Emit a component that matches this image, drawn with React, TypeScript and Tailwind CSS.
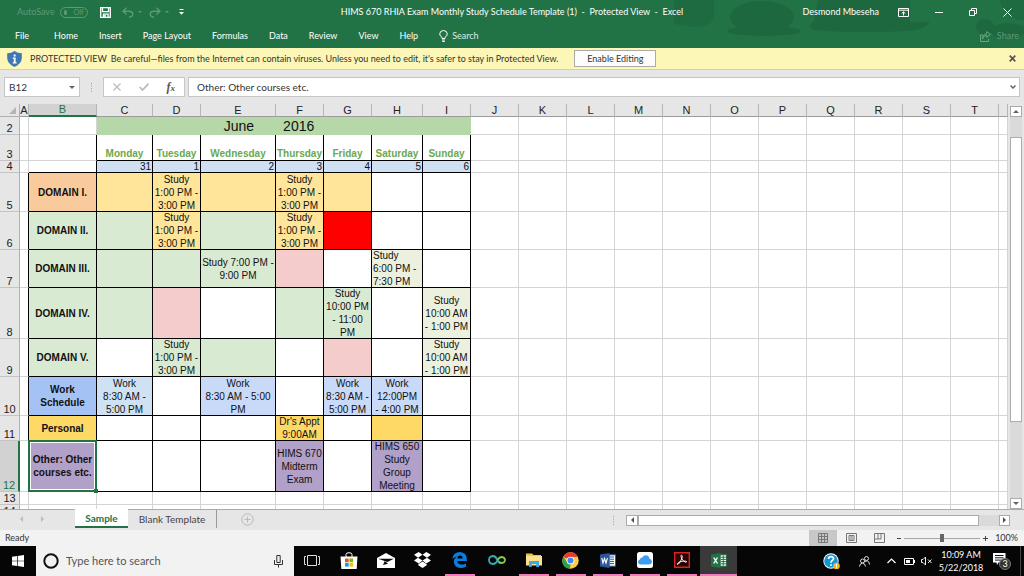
import React from "react";

const UI = "font-['Lato','Open_Sans',sans-serif]";
const SHEET = "font-['Liberation_Sans',Arial,sans-serif]";

type Cell = { text?: string; fill?: string; align?: string };
type Row = { n: number; height: string; label: string; fill: string; cells: Cell[] };

const GREEN = "bg-[#d9ead3]";
const YELLOW = "bg-[#ffe599]";
const PINK = "bg-[#f4cccc]";
const OLIVE = "bg-[#ebf1de]";
const BLUE = "bg-[#c9daf8]";
const GOLD = "bg-[#ffd966]";
const PURPLE = "bg-[#b1a0c7]";
const AFTERNOON = "Study\n1:00 PM -\n3:00 PM";
const MORNING = "Study\n10:00 AM\n- 1:00 PM";

const rows: Row[] = [
  { n: 5, height: "h-[39px]", label: "DOMAIN I.", fill: "bg-[#f9cb9c]", cells: [{ fill: YELLOW }, { fill: YELLOW, text: AFTERNOON }, { fill: YELLOW }, { fill: YELLOW, text: AFTERNOON }, { fill: YELLOW }, {}, {}] },
  { n: 6, height: "h-[38px]", label: "DOMAIN II.", fill: GREEN, cells: [{ fill: GREEN }, { fill: YELLOW, text: AFTERNOON }, { fill: GREEN }, { fill: YELLOW, text: AFTERNOON }, { fill: "bg-[#ff0000]" }, {}, {}] },
  { n: 7, height: "h-[38px]", label: "DOMAIN III.", fill: GREEN, cells: [{ fill: GREEN }, { fill: GREEN }, { fill: GREEN, text: "Study 7:00 PM -\n9:00 PM" }, { fill: PINK }, {}, { fill: OLIVE, text: "Study\n6:00 PM -\n7:30 PM", align: "text-left pl-px" }, {}] },
  { n: 8, height: "h-[51px]", label: "DOMAIN IV.", fill: GREEN, cells: [{ fill: GREEN }, { fill: PINK }, {}, { fill: GREEN }, { fill: GREEN, text: "Study\n10:00 PM\n- 11:00\nPM" }, {}, { fill: OLIVE, text: MORNING }] },
  { n: 9, height: "h-[38px]", label: "DOMAIN V.", fill: GREEN, cells: [{}, { fill: GREEN, text: AFTERNOON }, { fill: GREEN }, {}, { fill: PINK }, {}, { fill: OLIVE, text: MORNING }] },
  { n: 10, height: "h-[39px]", label: "Work\nSchedule", fill: "bg-[#a4c2f4]", cells: [{ fill: "bg-[#cfe2f3]", text: "Work\n8:30 AM -\n5:00 PM" }, {}, { fill: BLUE, text: "Work\n8:30 AM - 5:00\nPM" }, {}, { fill: BLUE, text: "Work\n8:30 AM -\n5:00 PM" }, { fill: BLUE, text: "Work\n12:00PM\n- 4:00 PM" }, {}] },
  { n: 11, height: "h-[25px]", label: "Personal", fill: GOLD, cells: [{}, {}, {}, { fill: GOLD, text: "Dr's Appt\n9:00AM" }, {}, { fill: GOLD }, {}] },
  { n: 12, height: "h-[51px]", label: "Other: Other\ncourses etc.", fill: PURPLE, cells: [{}, {}, {}, { fill: PURPLE, text: "HIMS 670\nMidterm\nExam" }, {}, { fill: PURPLE, text: "HIMS 650\nStudy\nGroup\nMeeting" }, {}] },
];

const columns = [
  ["A", "w-[9px]"], ["B", "w-[68px]"], ["C", "w-[56px]"], ["D", "w-[48px]"], ["E", "w-[75px]"],
  ["F", "w-[48px]"], ["G", "w-[48px]"], ["H", "w-[51px]"], ["I", "w-[48px]"], ["J", "w-[48px]"],
  ["K", "w-[48px]"], ["L", "w-[48px]"], ["M", "w-[48px]"], ["N", "w-[48px]"], ["O", "w-[48px]"],
  ["P", "w-[48px]"], ["Q", "w-[48px]"], ["R", "w-[48px]"], ["S", "w-[48px]"], ["T", "w-[48px]"], ["", ""],
];
const days = ["Monday", "Tuesday", "Wednesday", "Thursday", "Friday", "Saturday", "Sunday"];
const dates = [31, 1, 2, 3, 4, 5, 6];
const LINE = "border-r border-b border-[#d4d4d4] p-0";
const BLACK = "border-r border-b border-black p-0";

function Blank({ count }: { count: number }) {
  return <>{Array.from({ length: count }, (_, i) => <td key={i} className={LINE} />)}</>;
}

function RowHead({ n, active = false }: { n: number; active?: boolean }) {
  return (
    <th
      scope="row"
      className={
        active
          ? "border-r-2 border-b border-r-[#217346] border-b-[#c4c4c4] bg-[#d2d2d2] p-0 text-center align-bottom text-[11px] leading-[11px] font-normal text-[#217346]"
          : "border-r border-b border-r-[#b0b0b0] border-b-[#c4c4c4] bg-[#e6e6e6] p-0 text-center align-bottom text-[11px] leading-[11px] font-normal text-[#222]"
      }
    >
      {n}
    </th>
  );
}

function TitleBar() {
  return (
    <div className="relative grid h-6 grid-cols-[1fr_auto_1fr] items-center text-[9px] text-white">
      <div className="flex items-center pl-[17px]">
        <button type="button" role="switch" aria-checked="false" className="flex items-center gap-[5px] text-[#5d9a78]">
          AutoSave
          <span className="flex h-[11px] w-[28px] items-center gap-[6px] rounded-full border border-[#5d9a78] px-[3px] text-[7px] leading-none">
            <span className="size-[5px] rounded-full bg-[#5d9a78]" />
            Off
          </span>
        </button>
        <button type="button" aria-label="Save" className="ml-3">
          <svg className="size-[11px]" viewBox="0 0 11 11" fill="none" stroke="white" strokeWidth="1.3">
            <path d="M.7.7h9.6v9.6H.7zM2.5.7v4h6v-4M3.5 10.3V7.2h4.6v3.1" /><path d="M4.2 8h1.6v2H4.2z" fill="white" stroke="none" />
          </svg>
        </button>
        <button type="button" aria-label="Undo" className="ml-[11px] flex items-center gap-1">
          <svg className="h-[11px] w-3" viewBox="0 0 12 11" fill="none" stroke="#5d9a78" strokeWidth="1.4"><path d="M4.5.8 1 4.2l3.6 3.3M1.3 4.2H7q3.8.2 3.8 3Q10.700 9.800 7 10.200" /></svg>
          <span className="border-x-2 border-t-2 border-x-transparent border-t-[#5d9a78]" />
        </button>
        <button type="button" aria-label="Redo" className="ml-[7px] flex items-center gap-1">
          <svg className="h-[11px] w-3" viewBox="0 0 12 11" fill="none" stroke="#5d9a78" strokeWidth="1.4"><path d="M7.500.8 11 4.200 7.400 7.500M10.700 4.200H5q-3.800.2-3.800 3 .1 2.600 3.800 3" /></svg>
          <span className="border-x-2 border-t-2 border-x-transparent border-t-[#5d9a78]" />
        </button>
        <button type="button" aria-label="Customize toolbar" className="ml-[10px]">
          <svg className="h-[6px] w-[5px]" viewBox="0 0 5 6" fill="white"><path d="M.5 0h4v1h-4zM0 3h5L2.500 5.700z" /></svg>
        </button>
      </div>
      <h1 className="text-[9px] font-normal whitespace-pre">HIMS 670 RHIA Exam Monthly Study Schedule Template (1)  -  Protected View  -  Excel</h1>
      <div className="flex items-center justify-end pr-3">
        <span className="mr-[19px]">Desmond Mbeseha</span>
        <button type="button" aria-label="Ribbon display options" className="mr-[26px]">
          <svg className="h-[9px] w-[11px]" viewBox="0 0 11 9" fill="none" stroke="white"><path d="M.5.5h10v8H.5zM.5 2.200h10M5.500 7.500V4M3.700 5.500 5.500 3.800l1.800 1.700" /></svg>
        </button>
        <button type="button" aria-label="Minimize" className="mr-[26px] h-px w-2 bg-white" />
        <button type="button" aria-label="Restore" className="mr-[26px]">
          <svg className="size-2" viewBox="0 0 8 8" fill="none" stroke="white"><path d="M.5 2.500h5v5h-5zM2.500 2.500v-2h5v5h-2" /></svg>
        </button>
        <button type="button" aria-label="Close window">
          <svg className="size-[9px]" viewBox="0 0 9 9" stroke="white"><path d="m.5.500 8 8m0-8-8 8" /></svg>
        </button>
      </div>
    </div>
  );
}

const tabs = ["Home", "Insert", "Page Layout", "Formulas", "Data", "Review", "View", "Help"];

function Ribbon() {
  return (
    <div className="relative flex h-6 items-center text-[9px] text-white">
      <nav className="flex items-center gap-[21px] pl-[15px]">
        <a href="#file" className="mr-1">File</a>
        {tabs.map((t) => <a key={t} href={"#" + t.toLowerCase().replace(" ", "-")}>{t}</a>)}
        <button type="button" className="flex items-center gap-1 text-[#dcebe2]">
          <svg className="h-3 w-[9px]" viewBox="0 0 9 12" fill="none" stroke="white"><path d="M3 8.500V7.300Q.7 6 .7 3.900.9.700 4.500.500q3.600.2 3.800 3.400Q8.300 6 6 7.300v1.200zM3 10h3M3.300 11.500h2.400" /></svg>
          Search
        </button>
      </nav>
      <button type="button" className="mr-[5px] ml-auto flex items-center gap-[6px] text-[#5d9a78]">
        <svg className="h-[11px] w-[11px]" viewBox="0 0 11 11" fill="none" stroke="#6ba584"><path d="M3 4H.5v6.500h8V8M2.500 8Q3 4.500 6.800 4.300V6.300L10.500 3.300 6.800.7v2Q2.700 3.200 2.500 8" /></svg>
        Share
      </button>
    </div>
  );
}

function MessageBar() {
  return (
    <div role="alert" className="flex h-[22px] items-center border-b border-[#d8d29a] bg-[#fcf7b6] pl-[7px] text-[9px] text-[#333]">
      <svg className="mr-2 h-4 w-[15px]" viewBox="0 0 15 16"><path d="M7.500 0Q10.500 2.200 14.800 2.300V7.500Q14.300 13 7.500 16 .7 13 .2 7.500V2.300Q4.500 2.200 7.500 0" fill="#3d77b5" /><path d="M6.700 3.500h1.900v1.900H6.700zM5.800 6.500h2.800v4.700h1v1.200H5.700v-1.200h1.100V7.700h-1z" fill="white" /></svg>
      <strong className="mr-1 font-normal">PROTECTED VIEW</strong>
      <span className="mr-4">Be careful—files from the Internet can contain viruses. Unless you need to edit, it's safer to stay in Protected View.</span>
      <button type="button" className="h-[17px] w-[82px] border border-[#ababab] bg-[#fdfdfd] leading-none">Enable Editing</button>
      <button type="button" aria-label="Close message" className="mr-2 ml-auto">
        <svg className="size-[7px]" viewBox="0 0 7 7" stroke="#555" strokeWidth="1.700"><path d="m.7.700 5.600 5.600m0-5.600L.7 6.300" /></svg>
      </button>
    </div>
  );
}

function FormulaBar() {
  return (
    <div className="flex h-[34px] items-center bg-[#e6e6e6] pr-1 pl-1 text-[10px] text-[#333]">
      <div className="flex h-5 w-[76px] items-center border border-[#c6c6c6] bg-white pr-1">
        <input aria-label="Name box" defaultValue="B12" className="w-full min-w-0 pl-1 outline-none" />
        <span className="border-x-[3px] border-t-[3px] border-x-transparent border-t-[#666]" />
      </div>
      <svg className="mx-[11px] h-[9px] w-px" viewBox="0 0 1 9" fill="#999"><path d="M0 0h1v1H0zM0 2.600h1v1H0zM0 5.200h1v1H0zM0 7.800h1v1H0z" /></svg>
      <div className="flex h-5 w-[82px] items-center justify-between border border-[#c6c6c6] bg-white px-[9px]">
        <button type="button" aria-label="Cancel"><svg className="size-2" viewBox="0 0 8 8" stroke="#bbb" strokeWidth="1.200"><path d="m.5.500 7 7m0-7-7 7" /></svg></button>
        <button type="button" aria-label="Enter"><svg className="h-2 w-[10px]" viewBox="0 0 10 8" fill="none" stroke="#bbb" strokeWidth="1.700"><path d="m.7 4 2.800 3L9.500.7" /></svg></button>
        <button type="button" aria-label="Insert function" className="font-['Liberation_Serif',serif] text-[12px] leading-none font-bold text-[#555] italic">f<span className="text-[9px]">x</span></button>
      </div>
      <div className="ml-[3px] flex h-5 flex-1 items-center border border-[#c6c6c6] bg-white pr-[3px]">
        <input aria-label="Formula" defaultValue="Other: Other courses etc." className="w-full pl-2 outline-none" />
        <svg className="h-[4px] w-[6px]" viewBox="0 0 6 4" fill="none" stroke="#666" strokeWidth="1.500"><path d="m.5.500 2.500 2.500L5.500.500" /></svg>
      </div>
    </div>
  );
}

function Sheet() {
  return (
    <div className="min-w-0 flex-1 overflow-hidden bg-white">
      <table className={`${SHEET} w-full table-fixed border-separate border-spacing-0 text-[10px] leading-[13px] text-[#111]`}>
        <colgroup>
          <col className="w-[20px]" />
          {columns.map(([, w], i) => <col key={i} className={w} />)}
        </colgroup>
        <thead>
          <tr className="h-[13px]">
            <th className="border-r border-b border-[#b0b0b0] bg-[#e6e6e6] p-0"><span className="mr-[3px] ml-auto block w-[7px] border-b-[7px] border-l-[7px] border-b-[#b5b5b5] border-l-transparent" /></th>
            {columns.map(([name], i) => (
              <th
                key={i}
                scope="col"
                className={
                  name === "B"
                    ? "border-r border-b-2 border-r-[#b5b5b5] border-b-[#217346] bg-[#d2d2d2] p-0 text-[11px] leading-[11px] font-normal text-[#217346]"
                    : "border-r border-b border-r-[#b5b5b5] border-b-[#9b9b9b] bg-[#e6e6e6] p-0 text-[11px] leading-[12px] font-normal text-[#222]"
                }
              >
                {name}
              </th>
            ))}
          </tr>
        </thead>
        <tbody>
          <tr className="h-[18px]">
            <RowHead n={2} />
            <Blank count={2} />
            <td colSpan={7} className="bg-[#b6d7a8] p-0 pr-[30px]">
              <div className="flex justify-center gap-[29px] text-[14px] leading-[17px]"><span>June</span><span>2016</span></div>
            </td>
            <Blank count={12} />
          </tr>
          <tr className="h-[26px]">
            <RowHead n={3} />
            <Blank count={1} />
            <td className="border-r border-b border-r-black border-b-[#d4d4d4] p-0" />
            {days.map((d) => <th key={d} scope="col" className={`${BLACK} text-center align-bottom font-bold text-[#6aa84f]`}>{d}</th>)}
            <Blank count={12} />
          </tr>
          <tr className="h-[12px]">
            <RowHead n={4} />
            <Blank count={1} />
            <td className="border-r border-b border-black p-0" />
            {dates.map((d) => <td key={d} className={`${BLACK} bg-[#cfe0f3] pr-px text-right leading-[11px]`}>{d}</td>)}
            <Blank count={12} />
          </tr>
          {rows.map((r) => (
            <tr key={r.n} className={r.height}>
              <RowHead n={r.n} active={r.n === 12} />
              <td className="border-r border-b border-r-black border-b-[#d4d4d4] p-0" />
              <td className={`${BLACK} ${r.fill} relative text-center font-bold whitespace-pre`}>
                {r.label}
                {r.n === 12 && (
                  <span className="absolute -top-px -right-px -bottom-px -left-px border-2 border-[#217346] shadow-[inset_0_0_0_1px_white]">
                    <span className="absolute -right-[3px] -bottom-[3px] size-1 bg-[#217346]" />
                  </span>
                )}
              </td>
              {r.cells.map((c, i) => (
                <td key={i} className={`${BLACK} ${c.fill ?? "bg-white"} ${c.align ?? "text-center"}`}>
                  {c.text && <div className="-my-px whitespace-pre">{c.text}</div>}
                </td>
              ))}
              <Blank count={12} />
            </tr>
          ))}
          <tr className="h-[13px]"><RowHead n={13} /><Blank count={21} /></tr>
          <tr className="h-[13px]"><RowHead n={14} /><Blank count={21} /></tr>
        </tbody>
      </table>
    </div>
  );
}

function VerticalScroll() {
  return (
    <div className="flex w-4 flex-col items-center bg-[#e6e6e6] pt-[2px]">
      <button type="button" aria-label="Scroll up" className="flex h-[11px] w-3 items-center justify-center border border-[#ababab] bg-white"><span className="border-x-[3px] border-b-[3px] border-x-transparent border-b-[#666]" /></button>
      <div className="flex w-3 flex-1 flex-col bg-[#dadada] pt-5"><div className="h-[79%] border border-[#ababab] bg-white" /></div>
      <button type="button" aria-label="Scroll down" className="flex h-[11px] w-3 items-center justify-center border border-[#ababab] bg-white"><span className="border-x-[3px] border-t-[3px] border-x-transparent border-t-[#666]" /></button>
    </div>
  );
}

function SheetTabs() {
  return (
    <div className="flex h-[21px] items-start border-t border-[#ababab] bg-[#e6e6e6] text-[10px] text-[#444]">
      <div className="flex h-[18px] w-[75px] items-center gap-[18px] pl-5">
        <button type="button" aria-label="Previous sheet" className="border-y-[3px] border-r-[3px] border-y-transparent border-r-[#bbb]" />
        <button type="button" aria-label="Next sheet" className="border-y-[3px] border-l-[3px] border-y-transparent border-l-[#bbb]" />
      </div>
      <button type="button" className="-mt-px h-[19px] w-[53px] border-b-2 border-[#217346] bg-white leading-none font-bold text-[#217346]">Sample</button>
      <button type="button" className="h-[18px] w-[89px] border-r border-[#999] leading-none">Blank Template</button>
      <button type="button" aria-label="New sheet" className="mt-[3px] ml-6">
        <svg className="size-[13px]" viewBox="0 0 13 13" fill="none" stroke="#bbb"><circle cx="6.500" cy="6.500" r="5.700" /><path d="M3.500 6.500h6m-3-3v6" /></svg>
      </button>
      <div className="ml-auto flex h-5 items-center pr-[14px]">
        <svg className="mr-3 h-[9px] w-px" viewBox="0 0 1 9" fill="#999"><path d="M0 0h1v1H0zM0 2.600h1v1H0zM0 5.200h1v1H0zM0 7.800h1v1H0z" /></svg>
        <button type="button" aria-label="Scroll left" className="flex h-[11px] w-3 items-center justify-center border border-[#ababab] bg-white"><span className="border-y-[3px] border-r-[3px] border-y-transparent border-r-[#555]" /></button>
        <div className="h-[11px] w-[341px] border border-[#ababab] bg-white" />
        <div className="h-[11px] w-5 bg-[#dadada]" />
        <button type="button" aria-label="Scroll right" className="flex h-[11px] w-[11px] items-center justify-center border border-[#ababab] bg-white"><span className="border-y-[3px] border-l-[3px] border-y-transparent border-l-[#555]" /></button>
      </div>
    </div>
  );
}

function StatusBar() {
  return (
    <div className="flex h-4 items-center bg-[#f2f2f2] pl-[5px] text-[9px] text-[#333]">
      <span>Ready</span>
      <div className="ml-auto flex h-full items-center">
        <button type="button" aria-label="Normal view" className="flex h-full w-7 items-center justify-center bg-[#c8c8c8]">
          <svg className="size-[10px]" viewBox="0 0 10 10" fill="none" stroke="#777"><path d="M.5.500h9v9h-9zM3.500.500v9M6.500.500v9M.5 3.500h9M.5 6.500h9" /></svg>
        </button>
        <button type="button" aria-label="Page layout view" className="flex w-7 justify-center">
          <svg className="h-[10px] w-[11px]" viewBox="0 0 11 10" fill="none" stroke="#777"><path d="M.5.500h10v9H.500zM3 2.500h5v5H3zM4 4h3M4 6h3" /></svg>
        </button>
        <button type="button" aria-label="Page break preview" className="flex w-7 justify-center">
          <svg className="h-[10px] w-[11px]" viewBox="0 0 11 10" fill="none" stroke="#777"><path d="M.5.500h10v9H.500zM4 .5V6M7 .5V6M.5 6H7" /></svg>
        </button>
        <button type="button" aria-label="Zoom out" className="ml-1 h-px w-1 bg-[#444]" />
        <input type="range" aria-label="Zoom" defaultValue={50} className="mx-[3px] h-2 w-[76px] appearance-none bg-[linear-gradient(#a6a6a6,#a6a6a6)] bg-[length:100%_1px] bg-center bg-no-repeat [&::-webkit-slider-thumb]:h-2 [&::-webkit-slider-thumb]:w-1 [&::-webkit-slider-thumb]:appearance-none [&::-webkit-slider-thumb]:bg-[#666]" />
        <button type="button" aria-label="Zoom in"><svg className="size-[5px]" viewBox="0 0 5 5" stroke="#444"><path d="M0 2.500h5M2.500 0v5" /></svg></button>
        <span className="mr-[6px] ml-[7px]">100%</span>
      </div>
    </div>
  );
}

function TaskButton({ label, running = false, active = false, children }: { label: string; running?: boolean; active?: boolean; children: React.ReactNode }) {
  return (
    <button type="button" aria-label={label} className={active ? "flex h-full w-[37px] flex-col items-center bg-[#3a3a3a]" : "flex h-full w-[37px] flex-col items-center"}>
      <span className="flex flex-1 items-center">{children}</span>
      <span className={active ? "h-[2px] w-full bg-[#f07cc0]" : running ? "h-[2px] w-[30px] bg-[#f07cc0]" : "h-[2px] w-[30px]"} />
    </button>
  );
}

function Taskbar() {
  return (
    <div className="flex h-[30px] items-center bg-[#070606] text-white">
      <button type="button" aria-label="Start" className="flex w-9 justify-center">
        <svg className="size-3" viewBox="0 0 12 12" fill="white"><path d="M0 1.700 5 1v4.700H0zM5.700.900 12 0v5.700H5.700zM0 6.300h5V11l-5-.7zM5.700 6.300H12V12l-6.300-.9z" /></svg>
      </button>
      <label className="flex h-full w-[258px] items-center bg-[#f2f2f2] pl-[7px]">
        <svg className="mr-[7px] size-4" viewBox="0 0 16 16" fill="none" stroke="#111" strokeWidth="2"><circle cx="8" cy="8" r="6.700" /></svg>
        <input aria-label="Search" placeholder="Type here to search" className="min-w-0 flex-1 text-[11px] text-[#333] outline-none placeholder:text-[#555]" />
        <svg className="mr-[11px] h-[13px] w-[9px]" viewBox="0 0 9 13" fill="none" stroke="#333"><path d="M2.800.500h3.400v7H2.800zM.5 5v4.500h8V5M4.500 9.500v3" /></svg>
      </label>
      <div className="-ml-px flex h-full">
        <TaskButton label="Task view">
          <svg className="h-[11px] w-4" viewBox="0 0 16 11" fill="none" stroke="#ddd"><path d="M3.500.500h9v10h-9zM2 1.500H.5v8H2M14 1.500h1.500v8H14" /></svg>
        </TaskButton>
        <TaskButton label="Store">
          <svg className="h-[17px] w-[18px]" viewBox="0 0 18 17"><path d="M6 5V2.500Q6 .7 9 .7t3 1.800V5" fill="none" stroke="white" /><path d="M.5 4.500h17L16.700 17H1.300z" fill="white" /><path d="M5 6.500h3.700v3.700H5z" fill="#f25022" /><path d="M9.400 6.500h3.700v3.700H9.400z" fill="#7fba00" /><path d="M5 10.900h3.700v3.700H5z" fill="#00a4ef" /><path d="M9.400 10.900h3.700v3.700H9.400z" fill="#ffb900" /></svg>
        </TaskButton>
        <TaskButton label="Mail">
          <svg className="h-[15px] w-[18px]" viewBox="0 0 18 15"><path d="M0 5 9 0l9 5v10H0z" fill="white" /><path d="M1.200 5.700h15.600L10.500 9z" fill="#090909" /><path d="M7.800 8 11 10.800 6 12z" fill="#090909" /></svg>
        </TaskButton>
        <TaskButton label="Dropbox">
          <svg className="h-4 w-[17px]" viewBox="0 0 17 16" fill="white"><path d="M4.700 0 8.500 2.800 4 5.700 0 2.700zM12.300 0 8.500 2.800 13 5.700l4-3zM4 5.700 8.500 8.500 4.700 11.400 0 8.500zM13 5.700 8.500 8.500l3.800 2.900L17 8.500zM4.300 12.200 8.500 9.500l4.200 2.700v1L8.500 16l-4.200-2.800z" /></svg>
        </TaskButton>
        <TaskButton label="Edge" running>
          <svg className="h-4 w-[15px]" viewBox="0 0 15 16"><path d="M.3 7Q1.300.200 8 .1q6.700.5 6.800 7v2H5.200q.3 3.300 4.300 3.500 2.500 0 4.500-1.200v3.400q-2.500 1.200-5.500 1.200-6.200-.3-6.700-6.200Q2 5.800 5.600 4.500 2.300 4.500.3 7m5-0.600h5.400Q10.500 3.600 8 3.600 5.600 3.700 5.300 6.400" fill="#0a7ee0" /></svg>
        </TaskButton>
        <TaskButton label="Sync">
          <svg className="h-[10px] w-[18px]" viewBox="0 0 18 10" fill="none" strokeWidth="1.800"><path d="M9.300 5.500Q8.300 9 5 9 1 8.700 1 5t4-4q2.500 0 4.500 4t4 3" stroke="#35a8b5" /><path d="M9.500 5.500Q11 2 13.800 2q3 .3 3.200 3-.2 2.800-3 3-2-.1-3-1.500" stroke="#8bc34a" /></svg>
        </TaskButton>
        <TaskButton label="File Explorer" running>
          <svg className="h-[14px] w-4" viewBox="0 0 16 14"><path d="M0 .5h6L7.500 2H15v10H0z" fill="#f0c04a" /><path d="M0 3h16v9.500H0z" fill="#fce08a" /><path d="M3 8h10v6h-2.800v-3H5.800v3H3z" fill="#3fa9e6" /></svg>
        </TaskButton>
        <TaskButton label="Chrome" running>
          <svg className="size-[17px]" viewBox="0 0 18 18"><circle cx="9" cy="9" r="8.700" fill="#ffcd40" /><path d="M9 9 1.300 5Q3.800.4 9 .3 14.500.5 17 5.200H9z" fill="#e33b2e" /><path d="M1.400 4.900 5.700 11 9 13l-.8 4.700Q1.500 17 .3 10.500.1 7.300 1.400 4.900" fill="#2ba24c" /><circle cx="9" cy="9" r="4.100" fill="white" /><circle cx="9" cy="9" r="3.200" fill="#4285f4" /></svg>
        </TaskButton>
        <TaskButton label="Word" running>
          <svg className="h-[15px] w-4" viewBox="0 0 16 15"><path d="M9 1.800h6.500v11.400H9z" fill="white" stroke="#2b579a" /><path d="M10 4h4M10 6.200h4M10 8.400h4M10 10.600h4" stroke="#2b579a" /><path d="M0 1.600 9.500 0v15L0 13.400z" fill="#2b579a" /><path d="m1.800 5 1.200 5 1.500-4.500L6 10l1.400-5" fill="none" stroke="white" strokeWidth="1.100" /></svg>
        </TaskButton>
        <TaskButton label="iCloud" running>
          <svg className="size-4" viewBox="0 0 16 16"><rect width="16" height="16" rx="2.500" fill="white" /><path d="M4 12.500Q1 12.300 1 9.800q.2-2 2-2.400Q3.300 5.300 5.300 5.500 6.500 3 9 3.200q3 .3 3.600 3.600 2.400.6 2.400 3-.2 2.500-3 2.700z" fill="#3c9df3" /></svg>
        </TaskButton>
        <TaskButton label="Acrobat" running>
          <svg className="size-4" viewBox="0 0 16 16"><path d="M.7.700h14.600v14.600H.7z" fill="#2b0504" stroke="#d9251c" strokeWidth="1.400" /><path d="M7.500 3q1.300 0 .5 3Q7 9 4.500 12 3 13 3.300 11.700 4.200 10 8 9.300t4.700.4q-.5 1.300-2.700-.4Q7.200 7 7 4.500 7 3 7.500 3" fill="none" stroke="white" strokeWidth=".9" /></svg>
        </TaskButton>
        <TaskButton label="Excel" active>
          <svg className="h-[15px] w-4" viewBox="0 0 16 15"><path d="M9 1.800h6.500v11.400H9z" fill="white" stroke="#217346" /><path d="M10 4.200h5M10 6.400h5M10 8.600h5M10 10.800h5M12.300 2.500v10" stroke="#217346" /><path d="M0 1.600 9.500 0v15L0 13.400z" fill="#217346" /><path d="m2.700 4.500 3.800 6m0-6-3.800 6" stroke="white" strokeWidth="1.400" /></svg>
        </TaskButton>
      </div>
      <div className="ml-auto flex h-full items-center">
        <svg className="mr-[19px] size-[17px]" viewBox="0 0 17 17"><circle cx="8" cy="8" r="7.700" fill="white" /><circle cx="8" cy="8" r="6.800" fill="#1296d4" /><path d="M5.500 6Q5.700 3.700 8 3.700t2.500 2Q10.400 7 9 7.800 8 8.500 8 9.700M8 11.200V13" fill="none" stroke="white" strokeWidth="1.700" /><circle cx="13.500" cy="13" r="3.300" fill="#f9b517" /><path d="M13 10.700h1v3h-1zM13 14.200h1v1h-1z" fill="white" /></svg>
        <svg className="mr-[17px] size-[11px]" viewBox="0 0 11 11" fill="none" stroke="#ddd"><circle cx="3.500" cy="5" r="2" /><path d="M.5 10.500Q.8 7.300 3.500 7.200 6.200 7.300 6.500 10.500" /><circle cx="7.500" cy="2.500" r="2" /><path d="M5.500 6Q7 4.500 8.500 5q2 .7 2 3.500" /></svg>
        <svg className="mr-2 h-[6px] w-[9px]" viewBox="0 0 9 6" fill="none" stroke="white" strokeWidth="1.200"><path d="m.5 5 4-4 4 4" /></svg>
        <svg className="mr-[6px] h-[7px] w-[11px]" viewBox="0 0 11 7"><path d="M.5.500h9v6h-9z" fill="none" stroke="white" /><path d="M2 2h4v3H2zM10 2h1v3h-1z" fill="white" /></svg>
        <svg className="mr-[9px] h-[10px] w-[11px]" viewBox="0 0 11 10" fill="none" stroke="#eee"><path d="M.5 3.500H2L4.500 1v8L2 6.500H.5zM7 3.500l3.500 3.500m0-3.500L7 7" /></svg>
        <div className="flex w-10 flex-col items-center text-[9px] leading-[13px] whitespace-nowrap"><span>10:09 AM</span><span>5/22/2018</span></div>
        <svg className="mr-[9px] ml-3 h-[18px] w-[18px]" viewBox="0 0 18 18"><path d="M0 1h12.500v9.500H5.500L4 13l-.5-2.500H0z" fill="white" /><path d="M2 3.500h8.500M2 5.800h8.500M2 8.100h6" stroke="#111" /><circle cx="12" cy="12" r="5.500" fill="#333" stroke="#777" /><text x="12" y="15.200" textAnchor="middle" fontSize="9" fill="white">3</text></svg>
        <span className="mr-[3px] h-full w-px bg-[#444]" />
      </div>
    </div>
  );
}

export default function App() {
  return (
    <div className={`${UI} flex h-screen flex-col overflow-hidden bg-[#e6e6e6]`}>
      <header className="relative bg-[#217346]">
        <svg aria-hidden="true" className="absolute top-0 right-0 h-12 w-[350px]" viewBox="0 0 350 48" fill="#1e6840">
          <path d="M0 0h40v18q-4 10-24 9L0 24z" opacity=".7" />
          <ellipse cx="88" cy="17" rx="32" ry="16" />
          <ellipse cx="90" cy="31" rx="37" ry="5" />
          <path d="M144 0h92v22q12 1 20-1-4 9-24 10-50 3-92-1-8-3 0-9z" />
          <ellipse cx="311" cy="27" rx="9" ry="8" />
          <ellipse cx="334" cy="31" rx="17" ry="8" />
          <path d="M326 0h24v20q-20 0-24-20" opacity=".8" />
        </svg>
        <TitleBar />
        <Ribbon />
      </header>
      <MessageBar />
      <FormulaBar />
      <main className="flex min-h-0 flex-1">
        <Sheet />
        <VerticalScroll />
      </main>
      <SheetTabs />
      <StatusBar />
      <Taskbar />
    </div>
  );
}
